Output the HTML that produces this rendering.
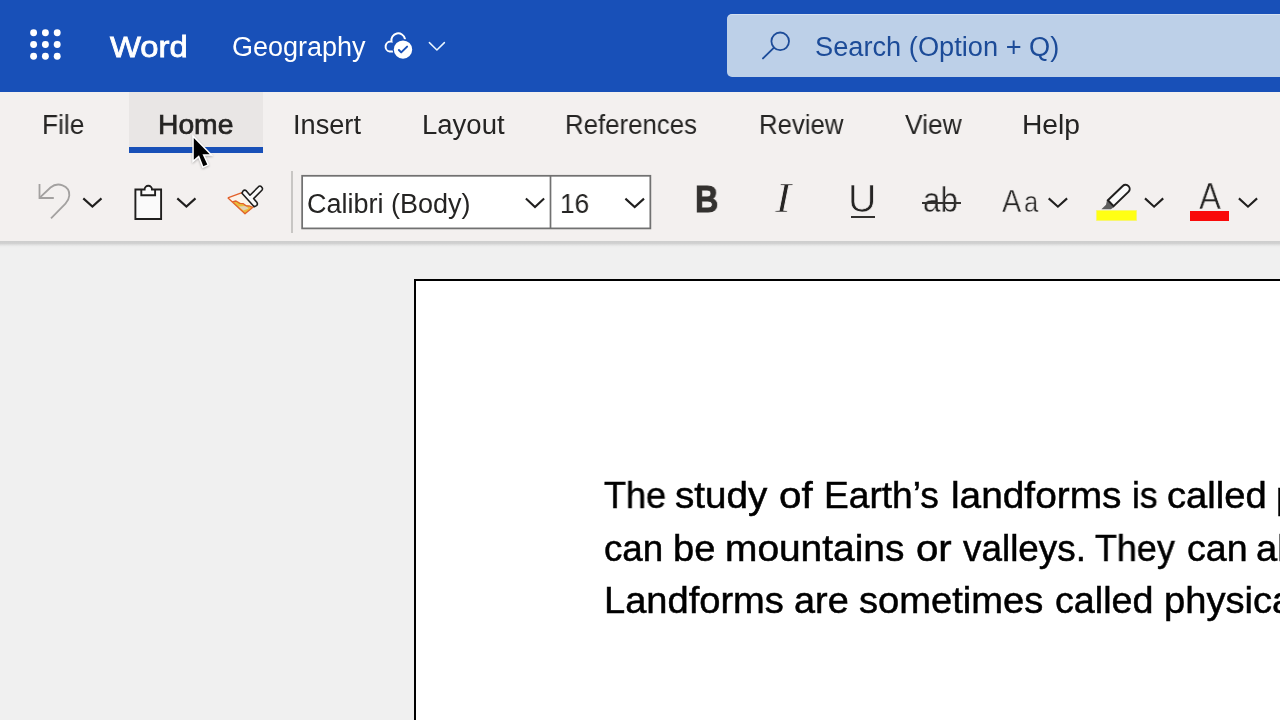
<!DOCTYPE html>
<html lang="en">
<head>
<meta charset="utf-8">
<title>Geography - Word</title>
<style>
html,body{margin:0;padding:0;}
body{width:1280px;height:720px;overflow:hidden;position:relative;background:#f0f0f0;font-family:"Liberation Sans",sans-serif;}
.abs{position:absolute;}
.t{position:absolute;white-space:nowrap;line-height:1;transform-origin:0 0;margin:0;padding:0;will-change:transform;}
#hdr{left:0;top:0;width:1280px;height:92px;background:#1850b8;}
#ribbon{left:0;top:92px;width:1280px;height:149px;background:#f3f0ef;}
#rshadow{left:0;top:241px;width:1280px;height:7px;background:linear-gradient(to bottom,#cdcdcd 0,#d1d1d1 2.4px,#e3e3e3 4px,#ededed 5.5px,#f0f0f0 7px);}
#hometab{left:129px;top:92px;width:134px;height:55px;background:#e9e6e5;}
#homeline{left:129px;top:147px;width:134px;height:6px;background:#1850b8;}
#search{left:727px;top:14px;width:600px;height:62.8px;background:#bdd0e8;border-radius:5px;box-shadow:inset 0 1px 0 rgba(255,255,255,0.35);}
#sep{left:291px;top:171px;width:2px;height:62px;background:#c8c6c4;}
#page{left:414px;top:279px;width:1000px;height:600px;background:#fff;border:2px solid #000;box-sizing:border-box;}
#doc{left:0;top:0;width:1280px;height:720px;overflow:hidden;}
#strike{left:922.2px;top:202px;width:38.9px;height:2px;background:#33312f;}
#uline{left:851px;top:215.6px;width:24px;height:2.2px;background:#33312f;}
#hlbar{left:1096.2px;top:210.3px;width:40.4px;height:11.2px;background:#ffff14;box-shadow:inset 0 0 0 0.8px #f6f48c;}
#fcbar{left:1190px;top:211.2px;width:39.2px;height:9.5px;background:#f90a0a;}
svg{position:absolute;overflow:visible;}
</style>
</head>
<body>

<!-- header -->
<div id="hdr" class="abs"></div>
<svg id="waffle" style="left:0;top:0" width="100" height="92" viewBox="0 0 100 92">
  <g fill="#fff">
    <circle cx="33.6" cy="32.7" r="3.45"/><circle cx="45.4" cy="32.7" r="3.45"/><circle cx="57.2" cy="32.7" r="3.45"/>
    <circle cx="33.6" cy="44.5" r="3.45"/><circle cx="45.4" cy="44.5" r="3.45"/><circle cx="57.2" cy="44.5" r="3.45"/>
    <circle cx="33.6" cy="56.3" r="3.45"/><circle cx="45.4" cy="56.3" r="3.45"/><circle cx="57.2" cy="56.3" r="3.45"/>
  </g>
</svg>

<!-- cloud saved icon -->
<svg id="cloud" style="left:0;top:0" width="1280" height="92" viewBox="0 0 1280 92">
  <path d="M393 51.6 H389.8 A5 5 0 0 1 391.5 41.6 A6.8 6.8 0 0 1 404.9 38.8" fill="none" stroke="#fff" stroke-width="2" stroke-linecap="round"/>
  <circle cx="403" cy="49.6" r="10.5" fill="#1850b8"/><circle cx="403" cy="49.6" r="9.2" fill="#fff"/>
  <path d="M398.9 50 L401.2 52.4 L407.1 46.6" fill="none" stroke="#1850b8" stroke-width="2" stroke-linecap="round" stroke-linejoin="round"/>
  <path d="M429.4 42.6 L436.9 50 L444.4 42.6" fill="none" stroke="#eaf6ff" stroke-width="1.5" stroke-linecap="round" stroke-linejoin="round"/>
</svg>

<!-- search -->
<div id="search" class="abs"></div>
<svg id="sicon" style="left:0;top:0" width="1280" height="92" viewBox="0 0 1280 92">
  <circle cx="780.2" cy="41.3" r="8.8" fill="none" stroke="#1d4c99" stroke-width="1.8"/>
  <path d="M774 47.6 L763 58.4" fill="none" stroke="#1d4c99" stroke-width="1.9" stroke-linecap="round"/>
</svg>
<div class="t" id="word" style="left:109.99px;top:33.37px;font-size:29.0px;color:#fff;-webkit-text-stroke:0.8px #fff;transform:scaleX(1.1295);">Word</div>
<div class="t" id="geo" style="left:232.34px;top:34.4px;font-size:27.0px;color:#fff;">Geography</div>
<div class="t" id="stext" style="left:814.92px;top:34.4px;font-size:27.0px;color:#1c4b98;transform:scaleX(1.0082);">Search (Option + Q)</div>

<!-- ribbon -->
<div id="ribbon" class="abs"></div>
<div id="rshadow" class="abs"></div>
<div id="hometab" class="abs"></div>
<div id="homeline" class="abs"></div>
<div class="t" id="tFile" style="left:41.83px;top:112.4px;font-size:27.0px;color:#252423;transform:scaleX(0.9733);">File</div>
<div class="t" id="tHome" style="left:157.54px;top:112.15px;font-size:27.0px;color:#252423;-webkit-text-stroke:0.7px #252423;transform:scaleX(1.0466);">Home</div>
<div class="t" id="tInsert" style="left:292.68px;top:112.4px;font-size:27.0px;color:#252423;transform:scaleX(1.0063);">Insert</div>
<div class="t" id="tLayout" style="left:421.67px;top:112.4px;font-size:27.0px;color:#252423;transform:scaleX(1.0188);">Layout</div>
<div class="t" id="tRefs" style="left:564.81px;top:112.4px;font-size:27.0px;color:#252423;transform:scaleX(0.9564);">References</div>
<div class="t" id="tReview" style="left:758.57px;top:112.4px;font-size:27.0px;color:#252423;transform:scaleX(0.9539);">Review</div>
<div class="t" id="tView" style="left:905.13px;top:112.4px;font-size:27.0px;color:#252423;transform:scaleX(0.9779);">View</div>
<div class="t" id="tHelp" style="left:1022.11px;top:112.4px;font-size:27.0px;color:#252423;transform:scaleX(1.0447);">Help</div>

<!-- toolbar -->
<div id="sep" class="abs"></div>
<svg id="fontbox" style="left:0;top:160px" width="1280" height="80" viewBox="0 160 1280 80"><rect x="302.15" y="175.8" width="348.2" height="52.6" fill="#fff" stroke="#717171" stroke-width="1.75"/><path d="M550.5 175.8 V228.4" stroke="#717171" stroke-width="1.7" fill="none"/></svg>
<svg id="tools" style="left:0;top:160px" width="1280" height="80" viewBox="0 160 1280 80">
  <!-- undo -->
  <g fill="none" stroke="#a3a1a0" stroke-width="1.8">
    <path d="M39.5 184 V198 H53.8"/>
    <path d="M39.8 197.7 L50.5 187.5 C54 184.6 58.5 183.9 62.5 185.3 C67 187 69.6 191 69.3 195.5 C69 199 67.5 201.5 65.5 203.6 L51 218.3"/>
  </g>
  <!-- chevrons -->
  <g fill="none" stroke="#201f1e" stroke-width="2.1" stroke-linejoin="miter">
    <path d="M83.3 198.4 L92.4 206.6 L101.5 198.4"/>
    <path d="M177.3 198.4 L186.4 206.6 L195.5 198.4"/>
    <path d="M525.9 198.6 L535 207 L544.1 198.6"/>
    <path d="M625.4 198.6 L634.7 207 L644 198.6"/>
    <path d="M1048.7 198.4 L1057.9 206.7 L1067.1 198.4"/>
    <path d="M1145 198.4 L1154.1 206.7 L1163.2 198.4"/>
    <path d="M1238.9 198.4 L1248 206.7 L1257.1 198.4"/>
  </g>
  <!-- clipboard -->
  <g fill="none" stroke="#201f1e" stroke-width="1.9" stroke-linejoin="miter">
    <path d="M144.6 189.5 H135.4 V219 H161.1 V189.5 H152 A3.7 3.7 0 0 0 144.6 189.5 Z" fill="#fafafa"/>
    <path d="M141.3 189.5 V195.3 H155.1 V189.5"/>
  </g>
  <!-- format painter -->
  <g stroke-linejoin="round">
    <path d="M227.8 197.8 L242 192.6 L253.8 206.5 L245 213.8 Z" fill="#fbf3ea"/>
    <path d="M232.3 202 L238 201.5 L244 204.5 L252.6 207.3 L245 213.8 Z" fill="#e9bd3a"/>
    <path d="M238.5 206.5 L246 206 L248.5 208.5 L243.5 210.5 Z" fill="#e3d2b4"/>
    <path d="M227.8 197.8 L242 192.6 M253.8 206.5 L245 213.8 L227.8 197.8 M232.3 202 L236 201 L239.5 203.3 L243 203.6 L246 205.8 L249.5 206 L252.6 207.4" fill="none" stroke="#e2602a" stroke-width="1.3"/>
    <path d="M242 193.2 L243 191 Q244.6 189.4 246.4 190.9 L250 195.2 L259 186.3 Q260.3 185.6 261.3 186.6 L262.3 188 Q262.8 189.2 261.9 190.2 L253.6 198.6 L257 202.6 Q258 204.4 256.5 205.6 L254.2 206.8 Z" fill="#fafafa" stroke="#201f1e" stroke-width="1.6"/>
  </g>
  <!-- highlighter pen -->
  <path d="M1107.1 199.8 L1114.4 206.7 L1110.9 209.2 L1101.4 209.2 L1106 204.8 Z" fill="#5e5e5e"/>
  <g transform="translate(1110.75 203.25) rotate(-44)">
    <path d="M0 -4.1 H20.6 A4.1 4.1 0 0 1 20.6 4.1 H0 Z" fill="#fafafa" stroke="#201f1e" stroke-width="2" stroke-linejoin="miter"/>
  </g>
</svg>
<div id="hlbar" class="abs"></div>
<div id="fcbar" class="abs"></div>
<div class="t" id="fname" style="left:306.57px;top:190.5px;font-size:27.0px;color:#252423;transform:scaleX(0.9971);">Calibri (Body)</div>
<div class="t" id="fsize" style="left:559.9px;top:189.5px;font-size:27.5px;color:#252423;transform:scaleX(0.9557);">16</div>
<div class="t" id="bB" style="left:694.74px;top:181.57px;font-size:36.5px;color:#33312f;font-weight:bold;-webkit-text-stroke:0.9px #33312f;transform:scaleX(0.888);">B</div>
<div class="t" id="bI" style="left:775.47px;top:178.21px;font-size:41.5px;color:#262524;font-style:italic;font-family:'Liberation Serif',serif;-webkit-text-stroke:0.7px #f3f0ef;will-change:transform;transform:scaleX(1.1722);">I</div>
<div class="t" id="bU" style="left:848.35px;top:178.67px;font-size:39.0px;color:#262524;-webkit-text-stroke:0.7px #f3f0ef;will-change:transform;transform:scaleX(1.0099);">U</div>
<div class="t" id="bab" style="left:922.88px;top:183.31px;font-size:35.5px;color:#262524;-webkit-text-stroke:0.4px #f3f0ef;will-change:transform;transform:scaleX(0.8841);">ab</div>
<div class="t" id="bAa1" style="left:1002.12px;top:185.2px;font-size:32.0px;color:#262524;-webkit-text-stroke:0.4px #f3f0ef;will-change:transform;transform:scaleX(0.9012);">A</div>
<div class="t" id="bAa2" style="left:1024.25px;top:187.42px;font-size:29.5px;color:#262524;-webkit-text-stroke:0.4px #f3f0ef;will-change:transform;transform:scaleX(0.8651);">a</div>
<div class="t" id="bA" style="left:1198.85px;top:179.31px;font-size:36.5px;color:#262524;-webkit-text-stroke:0.6px #f3f0ef;will-change:transform;transform:scaleX(0.8991);">A</div>
<div id="strike" class="abs"></div>
<div id="uline" class="abs"></div>

<!-- document -->
<div id="page" class="abs"></div>
<div id="doc" class="abs">
<div id="line1">
<div class="t" id="d1a" style="left:603.69px;top:477.95px;font-size:36.5px;color:#000;-webkit-text-stroke:0.5px #000;transform:scaleX(0.9882);">The</div>
<div class="t" id="d1b" style="left:675.45px;top:477.95px;font-size:36.5px;color:#000;-webkit-text-stroke:0.5px #000;transform:scaleX(1.0586);">study</div>
<div class="t" id="d1c" style="left:778.5px;top:477.95px;font-size:36.5px;color:#000;-webkit-text-stroke:0.5px #000;transform:scaleX(1.1054);">of</div>
<div class="t" id="d1d" style="left:823.51px;top:477.95px;font-size:36.5px;color:#000;-webkit-text-stroke:0.5px #000;transform:scaleX(1.0164);">Earth’s</div>
<div class="t" id="d1e" style="left:950.6px;top:477.95px;font-size:36.5px;color:#000;-webkit-text-stroke:0.5px #000;transform:scaleX(1.0632);">landforms</div>
<div class="t" id="d1f" style="left:1131.81px;top:477.95px;font-size:36.5px;color:#000;-webkit-text-stroke:0.5px #000;transform:scaleX(0.9744);">is</div>
<div class="t" id="d1g" style="left:1167.32px;top:477.95px;font-size:36.5px;color:#000;-webkit-text-stroke:0.5px #000;transform:scaleX(1.0463);">called</div>
<div class="t" id="d1h" style="left:1276.43px;top:477.95px;font-size:36.5px;color:#000;-webkit-text-stroke:0.5px #000;transform:scaleX(1.045);">physical</div>
</div>
<div id="line2">
<div class="t" id="d2a" style="left:603.63px;top:530.75px;font-size:36.5px;color:#000;-webkit-text-stroke:0.5px #000;transform:scaleX(1.0066);">can</div>
<div class="t" id="d2b" style="left:672.68px;top:530.75px;font-size:36.5px;color:#000;-webkit-text-stroke:0.5px #000;transform:scaleX(1.0444);">be</div>
<div class="t" id="d2c" style="left:724.59px;top:530.75px;font-size:36.5px;color:#000;-webkit-text-stroke:0.5px #000;transform:scaleX(1.065);">mountains</div>
<div class="t" id="d2d" style="left:915.51px;top:530.75px;font-size:36.5px;color:#000;-webkit-text-stroke:0.5px #000;transform:scaleX(1.1002);">or</div>
<div class="t" id="d2e" style="left:962.64px;top:530.75px;font-size:36.5px;color:#000;-webkit-text-stroke:0.5px #000;transform:scaleX(1.0101);">valleys.</div>
<div class="t" id="d2f" style="left:1095.49px;top:530.75px;font-size:36.5px;color:#000;-webkit-text-stroke:0.5px #000;transform:scaleX(0.9826);">They</div>
<div class="t" id="d2g" style="left:1186.6px;top:530.75px;font-size:36.5px;color:#000;-webkit-text-stroke:0.5px #000;transform:scaleX(1.0292);">can</div>
<div class="t" id="d2h" style="left:1256.06px;top:530.75px;font-size:36.5px;color:#000;-webkit-text-stroke:0.5px #000;transform:scaleX(1.045);">also</div>
</div>
<div id="line3">
<div class="t" id="d3a" style="left:603.69px;top:583.05px;font-size:36.5px;color:#000;-webkit-text-stroke:0.5px #000;transform:scaleX(1.0425);">Landforms</div>
<div class="t" id="d3b" style="left:794.07px;top:583.05px;font-size:36.5px;color:#000;-webkit-text-stroke:0.5px #000;transform:scaleX(1.0367);">are</div>
<div class="t" id="d3c" style="left:859.21px;top:583.05px;font-size:36.5px;color:#000;-webkit-text-stroke:0.5px #000;transform:scaleX(1.0443);">sometimes</div>
<div class="t" id="d3d" style="left:1054.59px;top:583.05px;font-size:36.5px;color:#000;-webkit-text-stroke:0.5px #000;transform:scaleX(1.0327);">called</div>
<div class="t" id="d3e" style="left:1163.68px;top:583.05px;font-size:36.5px;color:#000;-webkit-text-stroke:0.5px #000;transform:scaleX(1.045);">physical</div>
</div>
</div>

<!-- mouse pointer -->
<svg id="cursor" style="left:0;top:92px;filter:drop-shadow(0.6px 1.2px 0.9px rgba(0,0,0,0.28))" width="400" height="100" viewBox="0 92 400 100">
  <path d="M193.8 138 V159.7 L199 155.3 L203.3 166.3 L207.3 164.4 L202.5 154.2 H209.7 Z" fill="#fff" stroke="#fff" stroke-width="3" stroke-linejoin="miter" stroke-miterlimit="6"/>
  <path d="M193.8 138 V159.7 L199 155.3 L203.3 166.3 L207.3 164.4 L202.5 154.2 H209.7 Z" fill="#000"/>
</svg>

</body>
</html>
